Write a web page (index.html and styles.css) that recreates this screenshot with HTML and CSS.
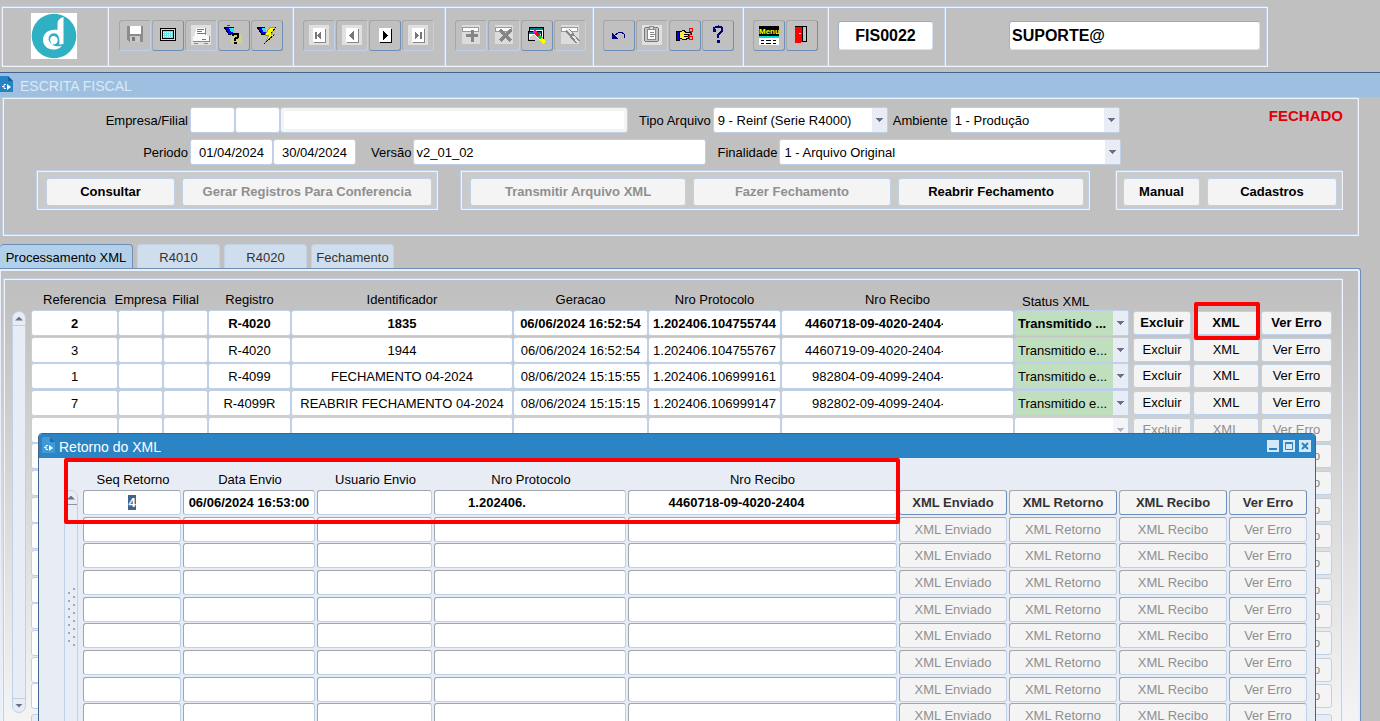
FILE: index.html
```html
<!DOCTYPE html>
<html lang="pt-BR">
<head>
    <meta charset="UTF-8">
    <meta name="viewport" content="width=device-width, initial-scale=1.0">
    <title>Escrita Fiscal</title>
    <link rel="stylesheet" href="styles.css">
</head>
<body>

    <header class="toolbar">
        <div class="section logo-section">
            <svg class="logo" viewBox="0 0 46 46">
                <rect width="46" height="46" fill="#fff"/>
                <circle cx="23" cy="23" r="22.3" fill="#2fb0c3"/>
                <path d="M32.500 4C29 5 26.500 7 26.500 11V17C18.500 15.500 12 20 12 26.500C12 33 17 37 23.500 36.500C26 36.500 29.500 35 31 32.500C27 34 23 33.500 21 31C25 32.500 27.500 29 26.500 26C25.500 22.500 21 22 19.500 25C18.500 27 19.500 29 21 31C16.500 29 16.500 23 20.500 20.800C23.500 19.500 26.500 20.500 27.500 23.500C29 27 28.500 30 28 31.500L32.500 31Z" fill="#fff"/>
            </svg>
        </div>
        <div class="section s-file">
            <button class="tool off" aria-label="Salvar"><svg viewBox="0 0 20 20"><path d="M2 1h16v16H4l-2-2z" fill="#8c8c8c"/><path d="M5 1h11v8H5z" fill="#fff"/><path d="M5 11h10v6H5z" fill="#c9c9c9"/><path d="M7 12h3v4H7z" fill="#777"/></svg></button>
            <button class="tool" aria-label="Tela"><svg viewBox="0 0 20 20"><rect x="2.500" y="3.500" width="15" height="12" rx="1" fill="#d8d8d8" stroke="#000"/><rect x="4.500" y="5.500" width="11" height="8" fill="#6fe3ea" stroke="#000"/><path d="M5 7.500h10M5 9.500h10M5 11.500h10" stroke="#fff" stroke-dasharray="1 1"/></svg></button>
            <button class="tool off" aria-label="Imprimir"><svg viewBox="0 0 20 20"><path d="M0 0h20v20H0z" fill="#e0e0e0"/><path d="M5 3h9l2 8H4z" fill="#fff"/><path d="M6 4.500h7M6 6.500h5M6 8.500h8" stroke="#777"/><path d="M2 11h16v5H2z" fill="#fafafa"/><path d="M14.500 3v7M2 16.500h16.500V11M3 18.500h4M13 18.500h4" stroke="#888" fill="none"/><path d="M11 14.500h4" stroke="#777"/></svg></button>
            <button class="tool" aria-label="Entrar consulta"><svg viewBox="0 0 20 20"><path d="M1 3l3 6 5 1V4L6 2z" fill="#00f"/><path d="M5 3h5v4H7z" fill="#29e4e8"/><path d="M0 2l4 6M1 2l9 1M4 9l5 1" stroke="#000"/><path d="M3 .5h3" stroke="red"/><path d="M7 9h11v10H7z" fill="#dce060" opacity=".5"/><path d="M9 11V9h5v3l-3 2v2M10 18h3" fill="none" stroke="#000" stroke-width="2"/></svg></button>
            <button class="tool" aria-label="Executar consulta"><svg viewBox="0 0 20 20"><path d="M1 3l3 6 5 1V4L6 2z" fill="#00f"/><path d="M5 3h4v4H6z" fill="#29e4e8"/><path d="M0 2l4 6M1 2l7 1M4 9l4 1" stroke="#000"/><path d="M13 2L8 10h4l-4 8 10-9h-4l5-7z" fill="#ff0" stroke="#777" stroke-width=".7"/><path d="M7 19l11-10M14 8l5-6" stroke="#000" stroke-dasharray="2 1"/></svg></button>
        </div>
        <div class="section s-nav">
            <button class="tool off" aria-label="Primeiro"><svg viewBox="0 0 20 20"><path d="M0 0h20v20H0z" fill="#e0e0e0"/><path d="M5 4h12v14H5z" fill="#888"/><path d="M4 3h12v14H4z" fill="#fff"/><path d="M7 7v7" stroke="#777" stroke-width="2"/><path d="M12 6v9l-4-4.500z" fill="#777"/></svg></button>
            <button class="tool off" aria-label="Anterior"><svg viewBox="0 0 20 20"><path d="M0 0h20v20H0z" fill="#e0e0e0"/><path d="M5 4h12v14H5z" fill="#888"/><path d="M4 3h12v14H4z" fill="#fff"/><path d="M12 6v9l-5-4.500z" fill="#777"/></svg></button>
            <button class="tool" aria-label="Próximo"><svg viewBox="0 0 20 20"><path d="M5 4h12v14H5z" fill="#000"/><path d="M4 3h12v14H4z" fill="#fff"/><path d="M8 6v9l5-4.500z" fill="#000"/></svg></button>
            <button class="tool off" aria-label="Último"><svg viewBox="0 0 20 20"><path d="M0 0h20v20H0z" fill="#e0e0e0"/><path d="M5 4h12v14H5z" fill="#888"/><path d="M4 3h12v14H4z" fill="#fff"/><path d="M13 7v7" stroke="#777" stroke-width="2"/><path d="M7 6v9l4-4.500z" fill="#777"/></svg></button>
        </div>
        <div class="section s-record">
            <button class="tool off" aria-label="Inserir"><svg viewBox="0 0 20 20"><path d="M1 0h18v19H1z" fill="#dcdcdc"/><path d="M1.500 2.500h16v4h-16z" fill="#fff" stroke="#999"/><path d="M11 5v12M5 10.500h12" stroke="#858585" stroke-width="3"/></svg></button>
            <button class="tool off" aria-label="Excluir registro"><svg viewBox="0 0 20 20"><path d="M1 0h18v19H1z" fill="#dcdcdc"/><path d="M1.500 2.500h16v4h-16z" fill="#fff" stroke="#999"/><path d="M6 5l11 11M17 5L6 16" stroke="#858585" stroke-width="3"/></svg></button>
            <button class="tool" aria-label="Editar"><svg viewBox="0 0 20 20"><path d="M2.500 2.500h14v11h-14z" fill="#fff" stroke="#000"/><path d="M3 3h13v2H3z" fill="#008080"/><path d="M1.500 6.500h13v9h-13z" fill="#fff" stroke="#000"/><path d="M2 7h12v2H2z" fill="#007878"/><path d="M2 15q1-5 6-5l5 6z" fill="#ccc"/><path d="M7 6l3 3" stroke="#f0f" stroke-width="4"/><path d="M9 8l3 3" stroke="red" stroke-width="4"/><path d="M12 11l3 3" stroke="#0c3" stroke-width="4"/><path d="M14 14l4 4" stroke="#ff0" stroke-width="3"/></svg></button>
            <button class="tool off" aria-label="Limpar"><svg viewBox="0 0 20 20"><path d="M1 0h18v19H1z" fill="#dcdcdc"/><path d="M1.500 2.500h16v4h-16z" fill="#fff" stroke="#999"/><path d="M7 5l11 12" stroke="#888" stroke-width="5"/><path d="M8 5l4 4M13 11l5 6" stroke="#e6e6e6" stroke-width="2"/></svg></button>
        </div>
        <div class="section s-edit">
            <button class="tool" aria-label="Desfazer"><svg viewBox="0 0 20 20"><path d="M5 11q6-6 10-2v4" fill="none" stroke="#000080"/><path d="M3 8v6h6z" fill="#000080"/></svg></button>
            <button class="tool off" aria-label="Colar"><svg viewBox="0 0 20 20"><path d="M0 0h20v20H0z" fill="#e0e0e0"/><rect x="2.500" y="2.500" width="14" height="14" rx="2" fill="#c4c4c4" stroke="#777"/><path d="M5.500 4.500h8v10h-8z" fill="#fff" stroke="#888"/><path d="M7.500 1.500h4v3h-4z" fill="#ddd" stroke="#888"/><path d="M8 7.500h4M8 9.500h5M8 11.500h4" stroke="#888"/></svg></button>
            <button class="tool" aria-label="Recortar"><svg viewBox="0 0 20 20"><path d="M1 6h3v9H1z" fill="#00f" stroke="#000"/><path d="M4.500 6.500l5-1 1 2h6v2h-3v4l-4 1-5-1z" fill="#ffe64a" stroke="#000"/><path d="M9 9.500h4M9 11.500h4" stroke="#000"/><circle cx="16" cy="5" r="2" fill="none" stroke="red"/><circle cx="16" cy="13" r="2" fill="none" stroke="red"/><path d="M13 12l4-5" stroke="red"/></svg></button>
            <button class="tool" aria-label="Ajuda"><svg viewBox="0 0 20 20"><path d="M6 6V3q5-3 8 0v3l-4 4v3" fill="none" stroke="#000080" stroke-width="2"/><path d="M5 4h3v3H5zM9 15h3v3H9zM13 3h2v4h-2z" fill="#000080"/></svg></button>
        </div>
        <div class="section s-menu">
            <button class="tool" aria-label="Menu"><svg viewBox="0 0 20 20"><path d="M0 13h20v7H0z" fill="#fff"/><path d="M0 1h20v12H0z" fill="#000"/><text x="0" y="9" class="menu-word">Menu</text><path d="M0 12h20" stroke="#00dcdc" stroke-width="2"/><path d="M2 15.500h16M2 18.500h16" stroke="#000" stroke-dasharray="3 2 5 2"/></svg></button>
            <button class="tool" aria-label="Sair"><svg viewBox="0 0 20 20"><path d="M3.500 1.500h11v15h-11z" fill="#c4c4c4" stroke="#000"/><path d="M3 2h7v14l-2 2H3z" fill="red"/><path d="M10.500 2v14" stroke="#000"/><path d="M7 8h2" stroke="#ff0"/></svg></button>
        </div>
        <div class="section s-code">
            <input class="big center" id="programa" value="FIS0022" aria-label="Programa" readonly>
        </div>
        <div class="section s-user">
            <input class="big" id="usuario" value="SUPORTE@" aria-label="Usuário" readonly>
        </div>
    </header>

    <div class="titlebar">
        <svg class="doc" viewBox="0 0 13 16"><path d="M0 0h8l5 5v11H0z" fill="#2383c4"/><path d="M8 0v5h5z" fill="#1a6098"/><path d="M7 8v6l4-3z" fill="#fff"/><path d="M6 8.500H4v4h2M2 10.500h2" fill="none" stroke="#fff"/></svg>
        <span>ESCRITA FISCAL</span>
    </div>

    <section class="filters etched">
        <div class="line">
            <label class="first" for="empresa">Empresa/Filial</label>
            <input class="w-code" id="empresa">
            <input class="w-code" aria-label="Filial">
            <input class="w-name" aria-label="Nome da empresa">
            <label for="tipo">Tipo Arquivo</label>
            <span class="select w-tipo"><select id="tipo"><option>9 - Reinf (Serie R4000)</option></select></span>
            <label for="ambiente">Ambiente</label>
            <span class="select w-amb"><select id="ambiente"><option>1 - Produção</option></select></span>
            <strong class="closed">FECHADO</strong>
        </div>
        <div class="line">
            <label class="first" for="inicio">Periodo</label>
            <input class="w-date" id="inicio" value="01/04/2024">
            <input class="w-date" aria-label="Fim do periodo" value="30/04/2024">
            <label class="wide" for="versao">Versão</label>
            <input class="w-versao" id="versao" value="v2_01_02">
            <label for="finalidade">Finalidade</label>
            <span class="select w-final"><select id="finalidade"><option>1 - Arquivo Original</option></select></span>
        </div>
        <div class="actions">
            <div class="group etched g1">
                <button class="action a-query">Consultar</button>
                <button class="action a-build" disabled>Gerar Registros Para Conferencia</button>
            </div>
            <div class="group etched g2">
                <button class="action a-send" disabled>Transmitir Arquivo XML</button>
                <button class="action a-close" disabled>Fazer Fechamento</button>
                <button class="action a-open">Reabrir Fechamento</button>
            </div>
            <div class="group etched g3">
                <button class="action a-manual">Manual</button>
                <button class="action a-query">Cadastros</button>
            </div>
        </div>
    </section>

    <nav class="tabs" role="tablist">
        <button class="tab active" role="tab" aria-selected="true">Processamento XML</button>
        <button class="tab" role="tab">R4010</button>
        <button class="tab" role="tab">R4020</button>
        <button class="tab" role="tab">Fechamento</button>
    </nav>

    <main class="workspace">
        <div class="frame etched">
            <div class="scroll">
                <button class="up" aria-label="Acima"></button>
                <button class="down" aria-label="Abaixo"></button>
            </div>
            <div class="records">
                <table>
                    <colgroup>
                        <col class="c-ref"><col class="c-emp"><col class="c-emp"><col class="c-reg"><col class="c-ident"><col class="c-ger"><col class="c-prot"><col><col class="c-status"><col class="c-del"><col class="c-xml"><col class="c-err">
                    </colgroup>
                    <thead>
                        <tr>
                            <th><span>Referencia</span></th><th><span>Empresa</span></th><th><span>Filial</span></th><th><span>Registro</span></th>
                            <th><span>Identificador</span></th><th><span>Geracao</span></th><th><span>Nro Protocolo</span></th><th><span>Nro Recibo</span></th>
                            <th class="status-head">Status XML</th><td></td><td></td><td></td>
                        </tr>
                    </thead>
                    <tbody id="records"></tbody>
                </table>
                <div class="message"></div>
            </div>
        </div>

        <div class="window" role="dialog" aria-label="Retorno do XML">
            <div class="window-title">
                <svg class="doc" viewBox="0 0 13 16"><path d="M0 0h8l5 5v11H0z" fill="#3f9ad6"/><path d="M8 0v5h5z" fill="#1d6ca8"/><path d="M7 8v6l4-3z" fill="#fff"/><path d="M6 8.500H4v4h2M2 10.500h2" fill="none" stroke="#fff"/></svg>
                <span>Retorno do XML</span>
                <button class="win-btn first-btn" aria-label="Minimizar"><svg viewBox="0 0 12 12"><path d="M2 9h8" stroke="#2b84c4" stroke-width="2"/></svg></button>
                <button class="win-btn" aria-label="Maximizar"><svg viewBox="0 0 12 12"><path d="M2.500 3h7v6.500h-7z" fill="none" stroke="#2b84c4"/><path d="M2 3h8" stroke="#2b84c4" stroke-width="2"/></svg></button>
                <button class="win-btn" aria-label="Fechar"><svg viewBox="0 0 12 12"><path d="M3 3l6 6M9 3L3 9" stroke="#2b84c4" stroke-width="2"/></svg></button>
            </div>
            <div class="window-body">
                <div class="scroll small">
                    <button class="up" aria-label="Acima"></button>
                    <div class="grip"></div>
                </div>
                <table>
                    <colgroup>
                        <col class="r-seq"><col class="r-data"><col class="r-user"><col class="r-prot"><col><col class="r-btn"><col class="r-btn"><col class="r-btn"><col class="r-err">
                    </colgroup>
                    <thead>
                        <tr>
                            <th>Seq Retorno</th><th>Data Envio</th><th>Usuario Envio</th><th>Nro Protocolo</th><th>Nro Recibo</th>
                            <td></td><td></td><td></td><td></td>
                        </tr>
                    </thead>
                    <tbody id="returns"></tbody>
                </table>
                <div class="mark mark-row"></div>
            </div>
        </div>
    </main>

    <script>
        const status = "Transmitido e...";
        const records = [
            ["2", "", "", "R-4020", "1835", "06/06/2024 16:52:54", "1.202406.104755744", "4460718-09-4020-2404-4", "Transmitido ..."],
            ["3", "", "", "R-4020", "1944", "06/06/2024 16:52:54", "1.202406.104755767", "4460719-09-4020-2404-", status],
            ["1", "", "", "R-4099", "FECHAMENTO 04-2024", "08/06/2024 15:15:55", "1.202406.106999161", "982804-09-4099-2404-", status],
            ["7", "", "", "R-4099R", "REABRIR FECHAMENTO 04-2024", "08/06/2024 15:15:15", "1.202406.106999147", "982802-09-4099-2404-5", status]
        ];
        const recordFields = ["Referencia", "Empresa", "Filial", "Registro", "Identificador", "Geracao", "Nro Protocolo", "Nro Recibo"];
        const returnFields = ["Seq Retorno", "Data Envio", "Usuario Envio", "Nro Protocolo", "Nro Recibo"];
        const returns = [["4", "06/06/2024 16:53:00", "", "1.202406.", "4460718-09-4020-2404"]];

        function fieldCells(fields, row, line) {
            return fields.map((name, i) =>
                `<td><input aria-label="${name} ${line + 1}" class="${name === "Nro Recibo" ? "recibo" : ""}${(row[i] || "").startsWith("98") ? " short" : ""}" value="${row[i] || ""}"></td>`
            ).join("");
        }

        function buttonCells(names, disabled, mark) {
            return names.map(name =>
                `<td class="btn-cell"><button${disabled ? " disabled" : ""}>${name}</button>${mark && name === "XML" ? '<div class="mark mark-xml"></div>' : ""}</td>`
            ).join("");
        }

        // grade principal, 15 linhas
        let html = "";
        for (let i = 0; i < 15; i++) {
            const row = records[i] || [];
            html += `<tr>${fieldCells(recordFields, row, i)}
                <td><span class="select ${row[8] ? "sent" : "off"}"><select aria-label="Status XML ${i + 1}"><option>${row[8] || ""}</option></select></span></td>
                ${buttonCells(["Excluir", "XML", "Ver Erro"], !row[8], i === 0)}</tr>`;
        }
        document.getElementById("records").innerHTML = html;

        // grade da janela de retorno
        html = "";
        for (let i = 0; i < 9; i++) {
            html += `<tr>${fieldCells(returnFields, returns[i] || [], i)}
                ${buttonCells(["XML Enviado", "XML Retorno", "XML Recibo", "Ver Erro"], i > 0, false)}</tr>`;
        }
        document.getElementById("returns").innerHTML = html;

        document.querySelector("#returns input").focus({ preventScroll: true });
        document.querySelector("#returns input").select();
    </script>

</body>
</html>
```

FILE: styles.css
```css
* {
    box-sizing: border-box;
}
body {
    margin: 0;
    height: 100vh;
    overflow: hidden;
    display: flex;
    flex-direction: column;
    background-color: #c0c0c0;
    color: #000;
    font-family: "Liberation Sans", Arial, sans-serif;
    font-size: 13px;
    line-height: 16px;
}
button, input, select {
    font: inherit;
    color: inherit;
    margin: 0;
    min-width: 0;
}
input, select {
    display: block;
    width: 100%;
    height: 26px;
    padding: 0 4px;
    background-color: #fff;
    border: 1px solid #bed1e8;
    border-radius: 3px;
    outline: none;
}
.etched {
    border: 1px solid #eef4fb;
    box-shadow: -1px -1px 0 #bed1e8, inset -1px -1px 0 #bed1e8;
}

/* barra de ferramentas */
.toolbar {
    flex: none;
    display: flex;
    height: 60px;
    margin: 7px 112px 5px 2px;
    border: 1px solid #eef4fb;
    box-shadow: -1px -1px 0 #bed1e8, inset -1px -1px 0 #bed1e8;
}
.section {
    display: flex;
    align-items: center;
    gap: 1px;
    padding: 0 0 3px 9px;
    border-left: 1px solid #eef4fb;
    box-shadow: -1px 0 0 #bed1e8;
    flex: none;
}
.logo-section {
    width: 105px;
    padding: 0 0 3px 28px;
    border-left: none;
    box-shadow: none;
}
.logo {
    width: 46px;
    height: 46px;
}
.s-file { width: 185px; padding-left: 10px; }
.s-nav { width: 152px; }
.s-record { width: 148px; }
.s-edit { width: 150px; }
.s-menu { width: 85px; }
.s-code { width: 117px; padding-right: 12px; }
.s-user {
    flex: 1;
    justify-content: flex-end;
    padding-right: 7px;
}
.tool {
    width: 32px;
    height: 31px;
    padding: 0 0 2px;
    display: flex;
    align-items: center;
    justify-content: center;
    background: none;
    border: 1px solid #a6a6a6;
    border-right-color: #6b8fb8;
    border-bottom-color: #6b8fb8;
    border-radius: 3px;
}
.tool.off {
    border-right-color: #bed1e8;
    border-bottom-color: #bed1e8;
}
.tool svg {
    flex: none;
    width: 20px;
    height: 20px;
    shape-rendering: crispEdges;
}
.menu-word {
    font-family: "Liberation Sans", Arial, sans-serif;
    font-size: 8px;
    font-weight: bold;
    fill: #ff0;
}
.big {
    height: 29px;
    padding: 0 2px;
    border-color: #9fa8b3 #d6e3f2 #d6e3f2 #9fb3cc;
    font-size: 16px;
    font-weight: bold;
}
.s-user .big {
    width: 251px;
}
.center {
    text-align: center;
}

.titlebar {
    flex: none;
    display: flex;
    align-items: center;
    gap: 7px;
    height: 25px;
    border-top: 1px solid #43638f;
    background-color: #9ebfdf;
    color: #dce9f5;
    font-size: 14px;
}
.titlebar span,
.window-title span {
    padding-top: 1px;
}
.doc {
    width: 13px;
    height: 16px;
    margin-bottom: 3px;
}

/* filtros */
.filters {
    flex: none;
    height: 138px;
    margin: 1px 21px 8px 3px;
    padding: 8px 15px 0 0;
}
.line {
    display: flex;
    align-items: center;
    height: 26px;
    margin-bottom: 6px;
}
.line label {
    padding: 2px 2px 0 11px;
    white-space: nowrap;
}
.line .first {
    width: 186px;
    text-align: right;
}
.line .wide {
    padding-left: 15px;
}
.line .w-tipo + label {
    padding-left: 5px;
}
.line input {
    padding: 0 2px;
}
.w-code { width: 45px; }
.line .w-name { width: 348px; box-shadow: inset 0 0 0 3px #f4f4f4; }
.w-date { width: 83px; text-align: center; }
.w-versao { width: 293px; }
.w-tipo { width: 175px; }
.w-amb { width: 170px; }
.w-final { width: 342px; }
.closed {
    align-self: flex-start;
    margin-left: auto;
    padding-top: 1px;
    color: #e00008;
    font-size: 15px;
}
.select {
    position: relative;
    display: block;
}
.select select {
    appearance: none;
    padding: 1px 16px 0 4px;
}
.select::after {
    content: "";
    position: absolute;
    top: 1px;
    right: 1px;
    bottom: 1px;
    width: 15px;
    background: linear-gradient(#6c7189, #6c7189) 4px 10px / 7px 1px no-repeat,
        linear-gradient(#6c7189, #6c7189) 5px 11px / 5px 1px no-repeat,
        linear-gradient(#6c7189, #6c7189) 6px 12px / 3px 1px no-repeat,
        linear-gradient(#6c7189, #6c7189) 7px 13px / 1px 1px no-repeat,
        #e8edf5;
    pointer-events: none;
}
.actions {
    display: flex;
    padding-left: 33px;
}
.group {
    display: flex;
    gap: 7px;
    height: 39px;
    padding: 6px 5px 4px 8px;
    background-color: #cacaca;
}
.g1 { width: 402px; margin-right: 23px; }
.g2 { width: 629px; margin-right: 26px; }
.g3 { width: 228px; padding-left: 6px; }
.action {
    flex: 1 1 auto;
    height: 28px;
    padding: 0;
    background-color: #f4f4f4;
    border: 1px solid #bed1e8;
    border-radius: 3px;
    font-weight: bold;
    white-space: nowrap;
}
.a-query { width: 129px; }
.a-build { width: 250px; }
.a-send { width: 216px; }
.a-close { width: 198px; }
.a-open { width: 186px; }
.a-manual { width: 76px; }
button:disabled {
    color: #8f8f8f;
}

/* abas */
.tabs {
    flex: none;
    display: flex;
    gap: 4px;
    height: 24px;
}
.tab {
    width: 83px;
    padding: 3px 0 0;
    background-color: #d0dded;
    border: 1px solid #c3d3e6;
    border-bottom: none;
    border-radius: 4px 4px 0 0;
    color: #333;
    white-space: nowrap;
}
.tab.active {
    width: 133px;
    background-color: #b2d0ea;
    border-color: #6b8fb8;
    border-left: none;
    color: #000;
}

.workspace {
    position: relative;
    flex: 1;
    min-height: 0;
    margin-right: 19px;
    padding: 8px 17px 0 4px;
    border-top: 1px solid #6b8fb8;
    border-right: 1px solid #6b8fb8;
    border-radius: 0 3px 0 0;
    box-shadow: inset 1px 2px 0 #e8eff8, inset -2px 0 0 #e8eff8;
    background: linear-gradient(#bfbfbf, #c2c2c2 10%, #f4f4f4);
}
.frame {
    display: flex;
    height: 500px;
    margin-top: 2px;
    padding: 0 10px 0 7px;
}
.scroll {
    flex: none;
    display: flex;
    flex-direction: column;
    justify-content: space-between;
    width: 14px;
    height: 402px;
    margin: 31px 5px 0 0;
    background-color: #e8edf5;
    border: 1px solid #bed1e8;
    border-radius: 7px;
}
.scroll button {
    height: 14px;
    padding: 0;
    background: none;
    border: 0 solid #bed1e8;
}
.scroll .up { border-bottom-width: 1px; }
.scroll .down { border-top-width: 1px; }
.scroll button::after {
    content: "";
    display: block;
    width: 8px;
    height: 4px;
    margin: 0 auto;
    background-color: #6c7189;
    clip-path: polygon(0 100%, 50% 0, 100% 100%);
}
.scroll .down::after {
    clip-path: polygon(0 0, 50% 100%, 100% 0);
}

/* grades */
table {
    width: 100%;
    table-layout: fixed;
    border-collapse: collapse;
}
th, td {
    padding: 0;
    white-space: nowrap;
}
thead tr {
    height: 30px;
}
th {
    padding-top: 9px;
    font-weight: normal;
}
th span {
    display: block;
    margin: 0 -6px;
}
.status-head {
    padding: 14px 0 0 8px;
    text-align: left;
}
tbody tr {
    height: 27px;
}
tbody tr:nth-child(3n+2) {
    height: 26px;
}
tbody tr:first-child {
    font-weight: bold;
}
td {
    position: relative;
    vertical-align: top;
}
td input {
    text-align: center;
}
.records {
    flex: 1;
    min-width: 0;
}
.c-ref { width: 87px; }
.c-emp { width: 45px; }
.c-reg { width: 83px; }
.c-ident { width: 222px; }
.c-ger { width: 135px; }
.c-prot { width: 133px; }
.c-status { width: 115px; }
.c-del { width: 62px; }
.c-xml { width: 68px; }
.c-err { width: 73px; }
.records td input {
    padding: 0 2px;
}
.records td .recibo { padding: 0 70px 0 23px; }
.records td .recibo.short { padding-left: 30px; }
.sent select,
.sent select:focus {
    background-color: #c0dfbe;
}
td .select select {
    padding-left: 3px;
}
.off::after {
    opacity: 0.5;
}
.btn-cell {
    padding: 1px 0 0 2px;
}
.btn-cell button {
    display: block;
    width: 100%;
    height: 24px;
    padding: 0;
    background-color: #f4f4f4;
    border: 1px solid #bed1e8;
    border-radius: 3px;
}
.records .btn-cell:nth-child(10) {
    padding-left: 4px;
}
.message {
    height: 24px;
    margin-top: 4px;
    background-color: #e8edf5;
    border: 1px solid #bed1e8;
    border-radius: 3px;
}

/* janela de retorno */
.window {
    position: absolute;
    z-index: 2;
    top: 164px;
    left: 38px;
    right: 44px;
    background-color: #e8edf5;
    border: 1px solid #43638f;
    border-radius: 4px 4px 0 0;
}
.window-title {
    display: flex;
    align-items: center;
    gap: 4px;
    height: 24px;
    padding: 0 4px 0 3px;
    background-color: #2b84c4;
    border-radius: 3px 3px 0 0;
    color: #fff;
    font-size: 14px;
}
.win-btn {
    width: 12px;
    height: 12px;
    padding: 0;
    background-color: #d3e9f8;
    border: none;
}
.win-btn svg {
    display: block;
}
.first-btn {
    margin-left: auto;
}
.window-body {
    position: relative;
    display: flex;
    align-items: flex-start;
    padding: 0 8px 0 25px;
}
.small {
    height: 300px;
    margin-top: 32px;
    justify-content: flex-start;
}
.small .up {
    border-color: #8a94a6;
}
.grip {
    height: 60px;
    margin: 82px 2px 0;
    background: radial-gradient(circle at 2px 6px, #9aa9c0 1px, transparent 1px) 0 0 / 10px 8px,
        radial-gradient(circle at 7px 2px, #9aa9c0 1px, transparent 1px) 0 0 / 10px 8px;
}
.window table {
    flex: 1;
    width: 0;
}
.window thead tr {
    height: 32px;
}
.window th {
    padding-top: 12px;
}
.window td input {
    width: calc(100% - 2px);
    height: 25px;
    border-color: #a0a6ae #bed1e8 #bed1e8 #a0a6ae;
}
.window td:nth-child(4) input {
    padding-right: 70px;
}
.window td .recibo {
    width: 100%;
    padding-right: 56px;
}
.r-seq { width: 100px; }
.r-data { width: 134px; }
.r-user { width: 117px; }
.r-prot { width: 194px; }
.r-btn { width: 110px; }
.r-err { width: 80px; }
.window .btn-cell {
    padding-top: 0;
}
.window .btn-cell button {
    height: 25px;
    border-color: #a6a6a6 #6b8fb8 #6b8fb8 #a6a6a6;
    color: #333;
}
.window .btn-cell button:disabled {
    border-color: #a6a6a6 #bed1e8 #bed1e8 #a6a6a6;
    color: #8f8f8f;
}
::selection {
    background-color: #43638f;
    color: #fff;
}
.mark {
    position: absolute;
    z-index: 1;
    border: 4px solid #f00;
    border-radius: 2px;
    pointer-events: none;
}
.mark-xml {
    top: -8px;
    right: -1px;
    bottom: -3px;
    left: 3px;
}
.mark-row {
    top: 0;
    left: 25px;
    right: 415px;
    height: 66px;
}
```
